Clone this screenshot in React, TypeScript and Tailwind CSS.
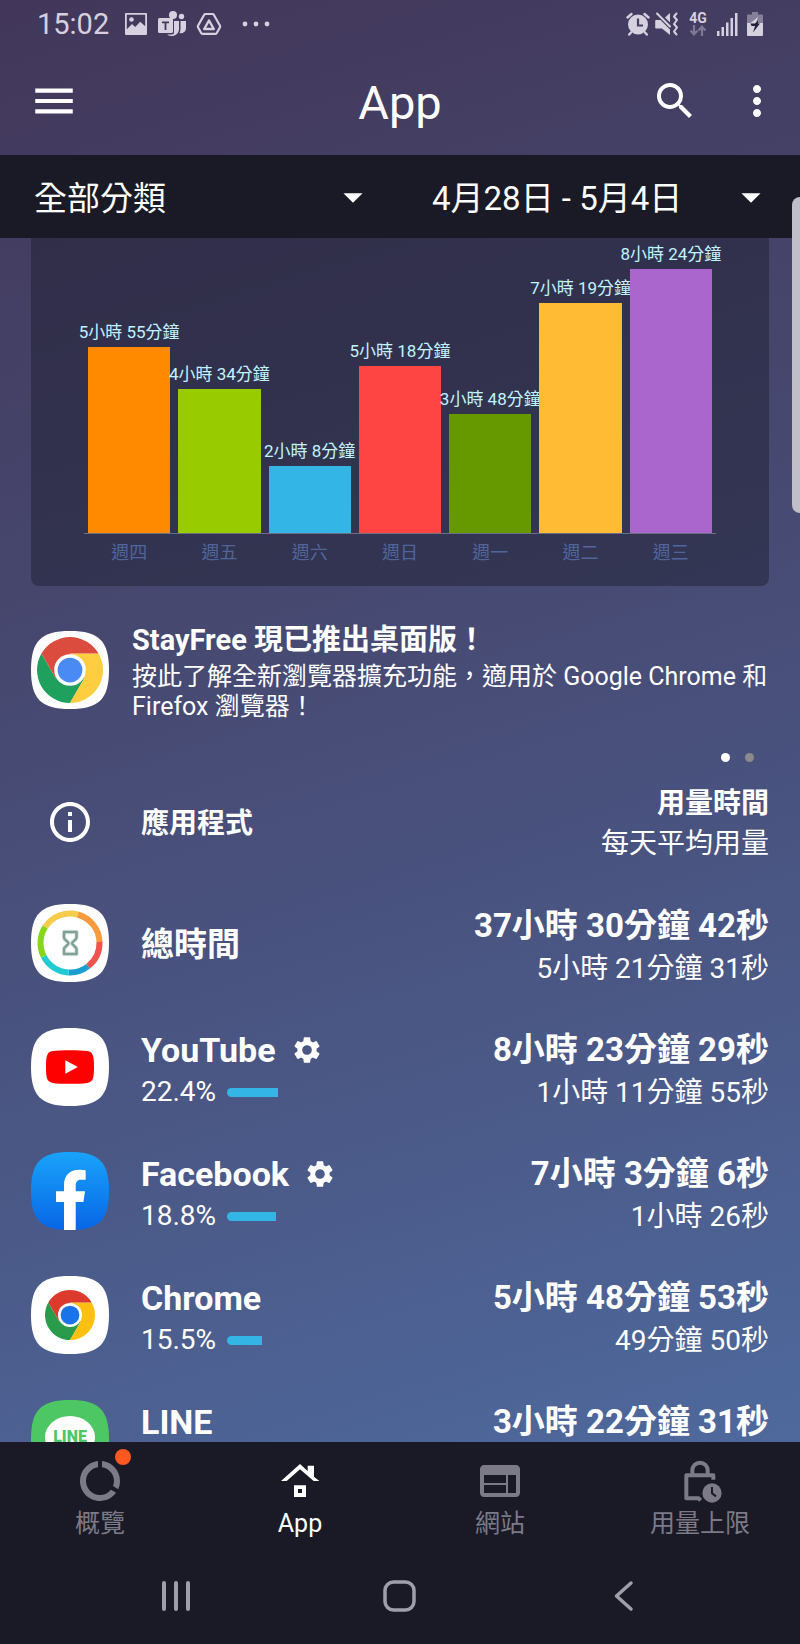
import type { ReactNode } from "react";
import {
  MdArrowDropDown,
  MdDataUsage,
  MdInfoOutline,
  MdMenu,
  MdMoreVert,
  MdSearch,
  MdSettings,
  MdWeb,
} from "react-icons/md";

const SQUIRCLE = "M39 0C68 0 78 10 78 39S68 78 39 78 0 68 0 39 10 0 39 0Z";

/* ---------- Status bar ---------- */

function PictureIcon() {
  return (
    <svg viewBox="0 0 24 24" className="size-6" aria-hidden="true">
      <path fill="currentColor" fillRule="evenodd" d="M2 1h20a1 1 0 0 1 1 1v20a1 1 0 0 1-1 1H2a1 1 0 0 1-1-1V2a1 1 0 0 1 1-1Zm.8 1.8v14.4L8 12l3.2 3 5-5.200 5 4.400V2.800Z" />
      <circle cx="7.500" cy="7.500" r="2.300" fill="currentColor" />
    </svg>
  );
}

function TeamsIcon() {
  return (
    <svg viewBox="0 0 28 28" className="size-7" aria-hidden="true">
      <g fill="currentColor">
        <circle cx="15" cy="5" r="4" />
        <circle cx="23.500" cy="6.500" r="2.700" />
        <path d="M22.500 11H28v7.500a5 5 0 0 1-6.500 4.500c.7-1.300 1-2.600 1-4Z" />
        <path d="M16 11h5v8.500A7.500 7.500 0 0 1 9 24.500h5a2 2 0 0 0 2-2Z" />
        <path fillRule="evenodd" d="M1.500 8h12A1.500 1.500 0 0 1 15 9.500v12a1.500 1.500 0 0 1-1.500 1.500h-12A1.500 1.500 0 0 1 0 21.500v-12A1.500 1.500 0 0 1 1.500 8ZM4 11.500v1.700h2.600V20h1.800v-6.800H11v-1.700Z" />
      </g>
    </svg>
  );
}

function DriveIcon() {
  return (
    <svg viewBox="0 0 26 24" className="h-6 w-[26px]" fill="none" stroke="currentColor" strokeLinejoin="round" aria-hidden="true">
      <path strokeWidth="2.200" d="M9.500 2h7a1.500 1.500 0 0 1 1.300.8l6.200 11a1.500 1.500 0 0 1 0 1.400L20.800 21a1.500 1.500 0 0 1-1.300.8h-13A1.500 1.500 0 0 1 5.200 21L2 15.200a1.500 1.500 0 0 1 0-1.400l6.200-11A1.500 1.500 0 0 1 9.500 2Z" />
      <path strokeWidth="2.400" d="M13 8.500 17.800 17H8.200Z" />
    </svg>
  );
}

function DotsIcon() {
  return (
    <svg viewBox="0 0 28 6" className="h-1.5 w-7" fill="currentColor" aria-hidden="true">
      <circle cx="3" cy="3" r="2.400" />
      <circle cx="14" cy="3" r="2.400" />
      <circle cx="25" cy="3" r="2.400" />
    </svg>
  );
}

function AlarmIcon() {
  return (
    <svg viewBox="0 0 24 24" className="size-6" aria-hidden="true">
      <g stroke="currentColor" strokeWidth="2.400" fill="none" strokeLinecap="round">
        <path d="m1.500 5.500 4-3.500M22.500 5.500l-4-3.500M5 20.500l-1.800 2M19 20.500l1.800 2" />
      </g>
      <circle cx="12" cy="12.500" r="10" fill="currentColor" />
      <path d="M12 6.500v7h5" stroke="#454264" strokeWidth="2.200" fill="none" />
    </svg>
  );
}

function MuteVibrateIcon() {
  return (
    <svg viewBox="0 0 24 24" className="size-6" aria-hidden="true">
      <g fill="currentColor">
        <path d="M1 8h4.500L15 17.500V23l-8-6.500H1a.8.8 0 0 1-.8-.8V8.800A.8.8 0 0 1 1 8Z" />
        <path d="M15 1v9.500l-5-5Z" />
      </g>
      <g fill="none" stroke="currentColor" strokeWidth="2" strokeLinecap="round" strokeLinejoin="round">
        <path d="m2 1.500 13 13" />
        <path d="m21.500 1.500-2.500 3 3 3.500-3 4 3 3.500-3 4 2.500 3" />
      </g>
    </svg>
  );
}

function NetworkIcon() {
  return (
    <div className="flex w-5 flex-col items-center">
      <span className="text-[14px] leading-[13px] font-bold">4G</span>
      <svg viewBox="0 0 18 11" className="h-[11px] w-[18px] opacity-40" fill="none" stroke="currentColor" strokeWidth="2.200" aria-hidden="true">
        <path d="M5 0v9M1.500 5.500 5 9.300l3.500-3.800M13 11V2M9.500 5.500 13 1.700l3.500 3.800" />
      </svg>
    </div>
  );
}

function SignalIcon() {
  return (
    <svg viewBox="0 0 21 23" className="h-[23px] w-[21px]" fill="currentColor" aria-hidden="true">
      <rect x="0" y="18" width="2.500" height="5" />
      <rect x="4.500" y="14" width="2.500" height="9" />
      <rect x="9" y="9.500" width="2.500" height="13.500" />
      <rect x="13.500" y="5" width="2.500" height="18" />
      <rect x="18" y="0" width="2.500" height="23" />
    </svg>
  );
}

function BatteryIcon() {
  return (
    <svg viewBox="0 0 16 24" className="h-6 w-4" aria-hidden="true">
      <path fill="currentColor" opacity=".45" d="M5 0h6v2.500h4a1 1 0 0 1 1 1V11H0V3.500a1 1 0 0 1 1-1h4Z" />
      <path fill="currentColor" d="M0 11h16v12a1 1 0 0 1-1 1H1a1 1 0 0 1-1-1Z" />
      <path fill="currentColor" d="m11 5-2 6H3.500Z" />
      <path fill="#24223a" d="M3.500 11.500H8L11 8.500v3h2L6 20.500 8 14H4.500Z" />
    </svg>
  );
}

function StatusBar() {
  return (
    <div className="flex h-12 shrink-0 items-center justify-between px-[37px] text-[#d6d0df]">
      <div className="flex items-center">
        <span className="w-[87px] text-[29px] leading-[48px]">15:02</span>
        <div className="flex items-center gap-2.5">
          <PictureIcon />
          <TeamsIcon />
          <DriveIcon />
        </div>
        <div className="ml-5 flex">
          <DotsIcon />
        </div>
      </div>
      <div className="flex items-center gap-[5px]">
        <AlarmIcon />
        <MuteVibrateIcon />
        <div className="mx-1 flex items-center">
          <NetworkIcon />
        </div>
        <SignalIcon />
        <div className="ml-1 flex">
          <BatteryIcon />
        </div>
      </div>
    </div>
  );
}

/* ---------- Header and filters ---------- */

function Header() {
  return (
    <header className="grid h-[107px] shrink-0 grid-cols-[1fr_auto_1fr] items-center px-[19px] pb-0.5">
      <button type="button" aria-label="選單" className="ml-2.5 justify-self-start">
        <MdMenu className="size-[50px]" />
      </button>
      <h1 className="pt-1 text-[47px] leading-[56px]">App</h1>
      <div className="flex items-center gap-[34px] justify-self-end">
        <button type="button" aria-label="搜尋">
          <MdSearch className="size-12" />
        </button>
        <button type="button" aria-label="更多">
          <MdMoreVert className="size-12" />
        </button>
      </div>
    </header>
  );
}

function FilterSelect({ label, value }: { label: string; value: string }) {
  return (
    <div className="relative">
      <select aria-label={label} defaultValue={value} className="w-full appearance-none bg-transparent pt-1 text-[33px] leading-[48px] outline-none">
        <option>{value}</option>
      </select>
      <MdArrowDropDown className="pointer-events-none absolute top-1/2 -right-1 size-[46px] -translate-y-1/2" />
    </div>
  );
}

function Filters() {
  return (
    <div className="grid h-[83px] shrink-0 grid-cols-2 items-center gap-[60px] bg-[#1a1a27] pr-[30px] pl-[34px]">
      <FilterSelect label="分類" value="全部分類" />
      <FilterSelect label="日期範圍" value="4月28日 - 5月4日" />
    </div>
  );
}

/* ---------- Chart ---------- */

const DAYS = [
  { day: "週四", minutes: 355, label: "5小時 55分鐘", color: "bg-[#ff8a00]" },
  { day: "週五", minutes: 274, label: "4小時 34分鐘", color: "bg-[#99cc00]" },
  { day: "週六", minutes: 128, label: "2小時 8分鐘", color: "bg-[#33b5e5]" },
  { day: "週日", minutes: 318, label: "5小時 18分鐘", color: "bg-[#ff4444]" },
  { day: "週一", minutes: 228, label: "3小時 48分鐘", color: "bg-[#669900]" },
  { day: "週二", minutes: 439, label: "7小時 19分鐘", color: "bg-[#ffbb33]" },
  { day: "週三", minutes: 504, label: "8小時 24分鐘", color: "bg-[#aa66cc]" },
];

function UsageChart() {
  return (
    <section className="rounded-b-lg bg-[#1a1c2c]/45 px-[53px] pb-[21px]">
      <div className="grid h-[296px] grid-cols-7 items-end border-b border-[#6c6e86]">
        {DAYS.map((d) => (
          <div key={d.day} className="flex flex-col items-center px-1">
            <span className="text-[17px] leading-[30px] whitespace-nowrap text-[#c0f4ff]">{d.label}</span>
            <div className={`w-full ${d.color}`} style={{ height: Math.round(d.minutes * 0.524) }} />
          </div>
        ))}
      </div>
      <div className="grid grid-cols-7 pt-[7px] text-center text-[18px] leading-[24px] text-[#50659c]">
        {DAYS.map((d) => (
          <span key={d.day}>{d.day}</span>
        ))}
      </div>
    </section>
  );
}

/* ---------- App icons ---------- */

function AppTile({ fill, children }: { fill: string; children: ReactNode }) {
  return (
    <svg viewBox="0 0 78 78" className="block size-[78px] shrink-0" aria-hidden="true">
      <path d={SQUIRCLE} fill={fill} />
      {children}
    </svg>
  );
}

function ChromeTile({ scale, colors }: { scale: number; colors: [string, string, string, string] }) {
  const [red, yellow, green, blue] = colors;
  return (
    <AppTile fill="#ffffff">
      <g transform={`translate(39 39) scale(${scale})`}>
        <path fill={green} d="M0 100A100 100 0 0 1-86.600-50L-43.300 25 0 0 43.300 25Z" />
        <path fill={yellow} d="M86.600-50A100 100 0 0 1 0 100L43.300 25 0 0V-50Z" />
        <path fill={red} d="M-86.600-50A100 100 0 0 1 86.600-50H0V0L-43.300 25Z" />
        <circle r="48" fill="#ffffff" />
        <circle r="37.500" fill={blue} />
      </g>
    </AppTile>
  );
}

const RING = [
  { from: 15, to: 88, color: "#f89b3c" },
  { from: 88, to: 142, color: "#ee5350" },
  { from: 142, to: 183, color: "#1b9fd0" },
  { from: 183, to: 243, color: "#22cbd2" },
  { from: 243, to: 303, color: "#86d61c" },
  { from: 303, to: 375, color: "#f6cc4c" },
];

function StayFreeTile() {
  return (
    <AppTile fill="#ffffff">
      {RING.map((s) => (
        <circle
          key={s.from}
          cx="39"
          cy="39"
          r="29.500"
          fill="none"
          stroke={s.color}
          strokeWidth="6"
          pathLength={360}
          strokeDasharray={`${s.to - s.from} ${360 - s.to + s.from}`}
          transform={`rotate(${s.from - 90} 39 39)`}
        />
      ))}
      <path d="M33 28h12.500v5.500c0 2.500-4.500 4-4.500 5.800s4.500 3.300 4.500 5.800V50H33v-4.900c0-2.500 4.500-4 4.500-5.800S33 36 33 33.500Z" fill="none" stroke="#dfe8e4" strokeWidth="4.500" strokeLinejoin="round" />
      <path d="M33 28h12.500v5.500c0 2.500-4.500 4-4.500 5.800s4.500 3.300 4.500 5.800V50H33v-4.900c0-2.500 4.500-4 4.500-5.800S33 36 33 33.500Z" fill="none" stroke="#7fa196" strokeWidth="2.500" strokeLinejoin="round" />
    </AppTile>
  );
}

function YouTubeTile() {
  return (
    <AppTile fill="#ffffff">
      <path fill="#ff0000" d="M15 39c0-5 .2-8 .8-10.500.8-3.300 2.700-5 6-5.400C26 22.500 32 22.300 39 22.300s13 .2 17.200.8c3.300.4 5.200 2.100 6 5.400.6 2.500.8 5.500.8 10.500s-.2 8-.8 10.500c-.8 3.300-2.700 5-6 5.400-4.200.6-10.200.8-17.200.8s-13-.2-17.200-.8c-3.300-.4-5.200-2.100-6-5.400C15.200 47 15 44 15 39Z" />
      <path fill="#ffffff" d="M34.300 32.200 46.800 39l-12.500 6.800Z" />
    </AppTile>
  );
}

function FacebookTile() {
  return (
    <AppTile fill="url(#fb)">
      <defs>
        <linearGradient id="fb" x1="0" y1="0" x2="0" y2="1">
          <stop offset="0" stopColor="#19a3fb" />
          <stop offset="1" stopColor="#0866e6" />
        </linearGradient>
      </defs>
      <path fill="#ffffff" d="M33 78V50h-8V39.300h8V33c0-9.700 6-15.200 15-15.200 2.600 0 5 .2 6.700.6v9.300h-4.200c-4 0-5.800 2-5.800 5.600v6H54L52.400 50h-7.700v28Z" />
    </AppTile>
  );
}

function LineTile() {
  return (
    <AppTile fill="#4cc764">
      <ellipse cx="39" cy="37" rx="25" ry="21" fill="#ffffff" />
      <text x="39" y="42" textAnchor="middle" fontSize="16" fontWeight="900" fill="#4cc764">
        LINE
      </text>
    </AppTile>
  );
}

/* ---------- Promo ---------- */

function Promo() {
  return (
    <section>
      <a href="#desktop" className="flex items-start gap-[23px]">
        <div className="pt-[9px]">
          <ChromeTile scale={0.33} colors={["#db4c3f", "#ffcd40", "#1fa15d", "#4a8af4"]} />
        </div>
        <div>
          <h2 className="text-[29px] leading-[36px] font-bold">StayFree 現已推出桌面版！</h2>
          <p className="mt-1 text-[25px] leading-[30px]">按此了解全新瀏覽器擴充功能，適用於 Google Chrome 和 Firefox 瀏覽器！</p>
        </div>
      </a>
      <div className="mt-[31px] flex justify-end gap-[15px] pr-[15px]">
        <span className="size-[9px] rounded-full bg-white" />
        <span className="size-[9px] rounded-full bg-[#8b8b8b]" />
      </div>
    </section>
  );
}

/* ---------- Usage table ---------- */

type Usage = {
  name: string;
  icon: ReactNode;
  total: string;
  average?: string;
  percent?: string;
  bar?: number;
  limit?: boolean;
};

const APPS: Usage[] = [
  { name: "總時間", icon: <StayFreeTile />, total: "37小時 30分鐘 42秒", average: "5小時 21分鐘 31秒" },
  { name: "YouTube", icon: <YouTubeTile />, total: "8小時 23分鐘 29秒", average: "1小時 11分鐘 55秒", percent: "22.4%", bar: 51, limit: true },
  { name: "Facebook", icon: <FacebookTile />, total: "7小時 3分鐘 6秒", average: "1小時 26秒", percent: "18.8%", bar: 49, limit: true },
  {
    name: "Chrome",
    icon: <ChromeTile scale={0.25} colors={["#db3a2c", "#fdc010", "#2a9a4b", "#1a73e8"]} />,
    total: "5小時 48分鐘 53秒",
    average: "49分鐘 50秒",
    percent: "15.5%",
    bar: 35,
  },
  { name: "LINE", icon: <LineTile />, total: "3小時 22分鐘 31秒", percent: "" },
];

function UsageRow({ app }: { app: Usage }) {
  const isTotal = app.percent === undefined;
  return (
    <tr className="h-[124px] align-top">
      <td className="w-[110px] pt-[23px]">{app.icon}</td>
      <th scope="row" className="pt-6 text-left font-normal">
        <div className={isTotal ? "text-[33px] leading-[80px] font-bold" : "flex items-center text-[34px] leading-[42px] font-bold"}>
          {app.name}
          {app.limit && (
            <button type="button" aria-label={`${app.name} 設定`} className="ml-[15px]">
              <MdSettings className="size-8" />
            </button>
          )}
        </div>
        {app.percent && (
          <div className="flex items-center gap-[11px] text-[28px] leading-[42px]">
            {app.percent}
            <span className="h-[9px] rounded-l-full bg-[#33b5e5]" style={{ width: app.bar }} />
          </div>
        )}
      </th>
      <td className="pt-6 text-right">
        <div className="text-[33px] leading-[42px] font-bold">{app.total}</div>
        <div className="text-[28px] leading-[44px]">{app.average}</div>
      </td>
    </tr>
  );
}

function UsageTable() {
  return (
    <table className="mt-[22px] w-full">
      <thead>
        <tr className="h-[97px] align-top text-[28px]">
          <td className="w-[110px] pt-[14px] pl-[15px]">
            <button type="button" aria-label="資訊" className="block">
              <MdInfoOutline className="size-12" />
            </button>
          </td>
          <th scope="col" className="text-left leading-[80px] font-bold">應用程式</th>
          <th scope="col" className="text-right leading-[40px] font-normal">
            <div className="font-bold">用量時間</div>
            <div>每天平均用量</div>
          </th>
        </tr>
      </thead>
      <tbody>
        {APPS.map((app) => (
          <UsageRow key={app.name} app={app} />
        ))}
      </tbody>
    </table>
  );
}

/* ---------- Bottom navigation ---------- */

function HouseIcon() {
  return (
    <svg viewBox="0 0 144 144" className="size-12" fill="currentColor" aria-hidden="true">
      <path d="M15 72 72 21l23 21V26h19v33l16 13h-17L72 37 32 72Z" />
      <path fillRule="evenodd" d="M54 85h36v35H54Zm12 11v12h12V96Z" />
    </svg>
  );
}

function LockClockIcon() {
  return (
    <svg viewBox="0 0 144 144" className="size-12" fill="none" stroke="currentColor" strokeWidth="12" aria-hidden="true">
      <path d="M49 52V40a23 23 0 0 1 46 0v12" />
      <path strokeLinejoin="round" d="M112 68V55H31v69h37l6 6" />
      <circle cx="108" cy="108" r="33" fill="#1a1a27" stroke="none" />
      <circle cx="108" cy="108" r="29" fill="currentColor" stroke="none" />
      <path stroke="#1a1a27" strokeWidth="6" d="M108 90v19l12 9" />
    </svg>
  );
}

const TABS = [
  { label: "概覽", icon: <MdDataUsage className="size-12" />, badge: true, active: false },
  { label: "App", icon: <HouseIcon />, badge: false, active: true },
  { label: "網站", icon: <MdWeb className="size-12" />, badge: false, active: false },
  { label: "用量上限", icon: <LockClockIcon />, badge: false, active: false },
];

function BottomNav() {
  return (
    <nav className="grid h-[106px] shrink-0 grid-cols-4 bg-[#1a1a27]">
      {TABS.map((t) => (
        <button
          key={t.label}
          type="button"
          aria-current={t.active ? "page" : undefined}
          className={`flex flex-col items-center pt-[15px] text-[25px] leading-[30px] ${t.active ? "text-white" : "text-[#7c7a86]"}`}
        >
          <span className="relative mb-1">
            {t.icon}
            {t.badge && <span className="absolute -top-2 -right-[7px] size-4 rounded-full bg-[#ff5722]" />}
          </span>
          {t.label}
        </button>
      ))}
    </nav>
  );
}

function SystemNav() {
  return (
    <div className="grid h-24 shrink-0 grid-cols-3 place-items-center bg-[#1a1a27] px-16 text-[#a09fa9]">
      <button type="button" aria-label="最近使用">
        <svg viewBox="0 0 36 36" className="size-9" stroke="currentColor" strokeWidth="4" strokeLinecap="round" aria-hidden="true">
          <path d="M6 5v26M18 5v26M30 5v26" />
        </svg>
      </button>
      <button type="button" aria-label="主畫面">
        <svg viewBox="0 0 36 36" className="size-9" fill="none" stroke="currentColor" strokeWidth="3.500" aria-hidden="true">
          <rect x="3" y="4" width="29" height="28" rx="8.500" />
        </svg>
      </button>
      <button type="button" aria-label="返回">
        <svg viewBox="0 0 36 36" className="size-9" fill="none" stroke="currentColor" strokeWidth="3.500" strokeLinecap="round" strokeLinejoin="round" aria-hidden="true">
          <path d="M25 5 10.500 18 25 31" />
        </svg>
      </button>
    </div>
  );
}

export default function App() {
  return (
    <div className="relative flex h-screen flex-col overflow-hidden bg-[linear-gradient(163deg,#42375a_0%,#46466d_32%,#4a5785_62%,#5070a6_100%)] font-['Roboto','Noto_Sans_CJK_TC',sans-serif] text-white">
      <StatusBar />
      <Header />
      <Filters />
      <main className="min-h-0 flex-1 overflow-hidden px-[31px]">
        <UsageChart />
        <div className="pt-9">
          <Promo />
        </div>
        <UsageTable />
      </main>
      <BottomNav />
      <SystemNav />
      <div className="absolute top-[197px] right-0 h-[316px] w-2 rounded-l-lg bg-[#c0bec9]" />
    </div>
  );
}
